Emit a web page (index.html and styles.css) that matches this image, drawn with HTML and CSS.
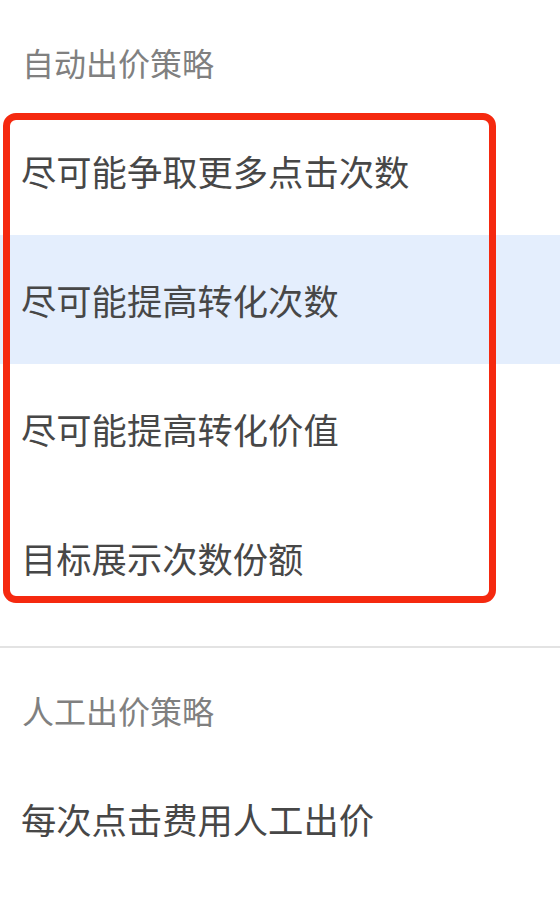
FILE: index.html
```html
<!DOCTYPE html>
<html lang="zh-CN">
<head>
<meta charset="utf-8">
<link rel="stylesheet" href="styles.css">
</head>
<body>
<div class="page">
  <section class="group">
    <div class="group-title">自动出价策略</div>
    <div class="option">尽可能争取更多点击次数</div>
    <div class="option selected">尽可能提高转化次数</div>
    <div class="option">尽可能提高转化价值</div>
    <div class="option">目标展示次数份额</div>
    <div class="highlight-box"></div>
  </section>
  <section class="group second">
    <div class="group-title">人工出价策略</div>
    <div class="option">每次点击费用人工出价</div>
  </section>
</div>
</body>
</html>
```
FILE: styles.css
```css
html, body {
  margin: 0;
  padding: 0;
  background: #ffffff;
}
body {
  font-family: "Noto Sans CJK SC", "Noto Sans", sans-serif;
  width: 560px;
  height: 902px;
  overflow: hidden;
}
.page {
  display: flex;
  flex-direction: column;
}
.group {
  position: relative;
  display: flex;
  flex-direction: column;
  padding-bottom: 24px;
  border-bottom: 2px solid #e3e3e3;
}
.group.second {
  border-bottom: none;
}
.group-title {
  padding: 42px 0 24px 22px;
  line-height: 40px;
  font-size: 32px;
  color: #808080;
}
.second .group-title {
  padding-top: 42px;
}
.option {
  height: 129px;
  display: flex;
  align-items: center;
  padding-left: 21px;
  font-size: 35.3px;
  color: #474747;
}
.option.selected {
  background: #e4eefd;
}
.highlight-box {
  position: absolute;
  left: 3px;
  top: 113px;
  width: 493px;
  height: 490px;
  box-sizing: border-box;
  border: 7px solid #f5290f;
  border-radius: 13px;
}
```
